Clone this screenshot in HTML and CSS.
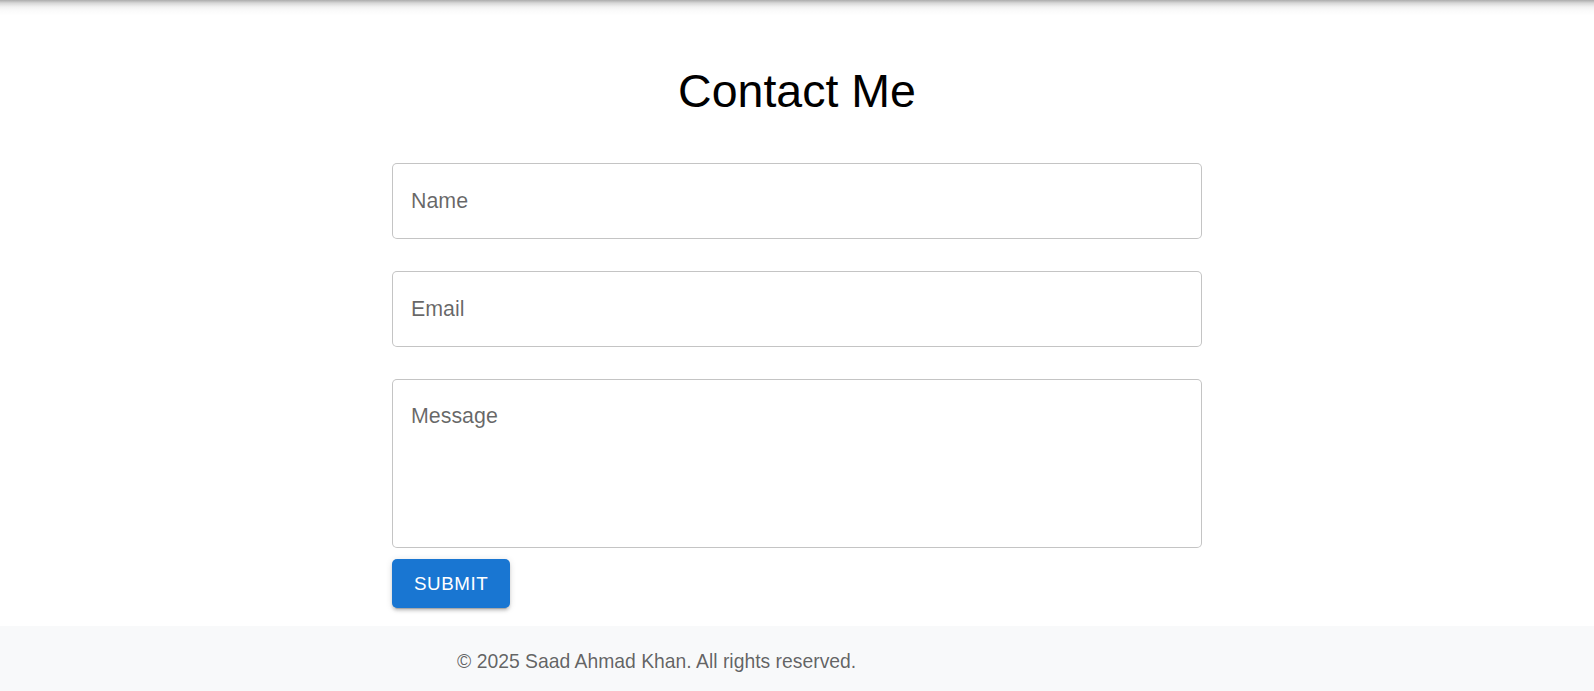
FILE: index.html
```html
<!DOCTYPE html>
<html lang="en">
<head>
<meta charset="utf-8">
<title>Contact Me</title>
<link rel="stylesheet" href="styles.css">
</head>
<body>
<div class="topshade"></div>
<main class="main">
  <h1 class="title">Contact Me</h1>
  <form class="form">
    <input class="field" type="text" placeholder="Name">
    <input class="field" type="email" placeholder="Email">
    <textarea class="field area" placeholder="Message"></textarea>
    <div class="actions">
      <button class="submit" type="button">Submit</button>
    </div>
  </form>
</main>
<footer class="footer">
  <p class="copy">© 2025 Saad Ahmad Khan. All rights reserved.</p>
</footer>
</body>
</html>
```
FILE: styles.css
```css
* { box-sizing: border-box; }
html, body { margin: 0; padding: 0; background: #fff; }
body {
  font-family: "Liberation Sans", Arial, sans-serif;
  color: #000;
  min-height: 691px;
  display: flex;
  flex-direction: column;
  position: relative;
}
.topshade {
  position: absolute;
  top: 0; left: 0; right: 0;
  height: 16px;
  background: linear-gradient(to bottom, rgba(0,0,0,0.33) 0px, rgba(0,0,0,0.16) 3px, rgba(0,0,0,0.05) 7px, rgba(0,0,0,0.015) 11px, rgba(0,0,0,0) 16px);
  pointer-events: none;
}
.main {
  padding-top: 63px;
  padding-bottom: 18px;
}
.title {
  margin: 0;
  text-align: center;
  font-size: 46.5px;
  line-height: 57px;
  font-weight: 400;
  color: #000;
}
.form {
  width: 810px;
  margin: 43px auto 0;
  display: flex;
  flex-direction: column;
  gap: 32px;
}
.field {
  display: block;
  width: 100%;
  height: 76px;
  border: 1px solid rgba(0,0,0,0.23);
  border-radius: 5px;
  padding: 0 18px;
  font-family: "Liberation Sans", Arial, sans-serif;
  font-size: 21.4px;
  color: rgba(0,0,0,0.87);
  background: #fff;
  outline: none;
}
.field::placeholder { color: rgba(0,0,0,0.6); opacity: 1; }
.area {
  height: 169px;
  padding: 21px 18px;
  line-height: 30.8px;
  resize: none;
}
.actions {
  margin-top: -21px;
  display: flex;
}
.submit {
  height: 49px;
  padding: 0 22px;
  border: none;
  border-radius: 5px;
  background: #1976d2;
  color: #fff;
  font-family: "Liberation Sans", Arial, sans-serif;
  font-size: 18.8px;
  letter-spacing: 0.54px;
  text-transform: uppercase;
  box-shadow: 0 4px 1px -3px rgba(0,0,0,0.2), 0 3px 3px 0 rgba(0,0,0,0.14), 0 1px 7px 0 rgba(0,0,0,0.12);
  cursor: pointer;
}
.footer {
  background: #f8f9fa;
  height: 65px;
  padding: 21px 0 0 457px;
}
.copy {
  margin: 0;
  font-size: 19.35px;
  line-height: 28.8px;
  color: rgba(0,0,0,0.62);
}
```
